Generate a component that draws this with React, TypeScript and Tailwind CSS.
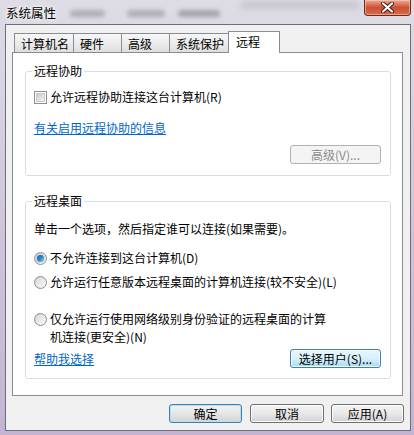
import React from "react";

const font = { fontFamily: '"Noto Sans CJK SC", "Noto Sans", sans-serif' };

function Tab({ label, w, selected, first }: { label: string; w: string; selected?: boolean; first?: boolean }) {
  if (selected) {
    return (
      <div
        className={`relative z-10 -ml-[2px] -mb-[1px] h-[22px] ${w} border border-b-0 border-[#898c95] bg-white pl-[7px] pt-[3px] text-[12px] leading-[14px] text-black`}
      >
        {label}
      </div>
    );
  }
  return (
    <div
      className={`${first ? "" : "-ml-[1px]"} h-[19px] ${w} border border-b-0 border-[#898c95] bg-gradient-to-b from-[#f7f7f7] via-[#ececec] to-[#dedede] pl-[6px] pt-[3px] text-[12px] leading-[14px] text-black`}
    >
      {label}
    </div>
  );
}

function Checkbox() {
  return (
    <div className="flex h-[13px] w-[13px] items-center justify-center border border-[#8e8f8f] bg-white">
      <div className="h-[9px] w-[9px] border border-[#c8c8c8] bg-gradient-to-br from-[#cbcbcb] to-[#f4f4f4]" />
    </div>
  );
}

function Radio({ checked }: { checked?: boolean }) {
  return (
    <div className="flex h-[13px] w-[13px] items-center justify-center rounded-full border border-[#8e8f8f] bg-gradient-to-br from-[#d0d0d0] to-[#fafafa]">
      {checked ? (
        <div className="h-[7px] w-[7px] rounded-full bg-gradient-to-br from-[#1b5f9a] via-[#2f86c8] to-[#8fd0f5] shadow-[0_0_1px_#0a3e6e]" />
      ) : (
        <div className="h-[9px] w-[9px] rounded-full bg-gradient-to-br from-[#dcdcdc] to-[#f7f7f7]" />
      )}
    </div>
  );
}

function Button({
  children,
  w,
  variant = "normal",
}: {
  children: React.ReactNode;
  w: string;
  variant?: "normal" | "default" | "hot" | "disabled";
}) {
  const base = `flex h-[19px] ${w} items-center justify-center rounded-[3px] border text-[12px] leading-[14px]`;
  if (variant === "disabled") {
    return <div className={`${base} border-[#adb2b5] bg-[#f4f4f4] text-[#8a8a8a]`}>{children}</div>;
  }
  if (variant === "hot") {
    return (
      <div className={`${base} border-[#3c7fb1] bg-gradient-to-b from-[#eaf6fd] via-[#d9f0fc] to-[#a7d9f5] text-black shadow-[inset_0_0_0_1px_#f4fbff]`}>
        {children}
      </div>
    );
  }
  if (variant === "default") {
    return (
      <div className={`${base} border-[#3c7fb1] bg-gradient-to-b from-[#f2f2f2] via-[#e6e6e6] to-[#d3d3d3] text-black shadow-[inset_0_0_0_1px_#b9dff5]`}>
        {children}
      </div>
    );
  }
  return (
    <div className={`${base} border-[#707070] bg-gradient-to-b from-[#f4f4f4] via-[#e8e8e8] to-[#d2d2d2] text-black shadow-[inset_0_0_0_1px_#fbfbfb]`}>
      {children}
    </div>
  );
}

export default function App() {
  return (
    <div
      className="relative h-[435px] w-[414px] overflow-hidden bg-gradient-to-b from-[#dedce4] via-[#cfc6db] to-[#c3b4d4]"
      style={font}
    >
      {/* blurred background bits behind glass title bar */}
      <div className="pointer-events-none absolute left-[70px] top-[10px] h-[7px] w-[35px] rounded bg-[#9c9aa6] opacity-70 blur-[2px]" />
      <div className="pointer-events-none absolute left-[127px] top-[10px] h-[7px] w-[38px] rounded bg-[#9c9aa6] opacity-70 blur-[2px]" />
      <div className="pointer-events-none absolute left-[178px] top-[10px] h-[7px] w-[42px] rounded bg-[#8e8c98] opacity-70 blur-[2px]" />
      <div className="pointer-events-none absolute left-[240px] top-[2px] h-[6px] w-[120px] rounded bg-[#a9a6b4] opacity-50 blur-[3px]" />

      {/* title bar */}
      <div className="relative flex h-[24px] items-start">
        <div
          className="pl-[6px] pt-[6px] text-[12.5px] leading-[14px] text-black"
          style={{ textShadow: "0 0 6px #fff, 0 0 3px #fff" }}
        >
          系统属性
        </div>
        <div className="ml-auto mr-[3px] flex h-[16px] w-[47px] items-center justify-center rounded-b-[4px] border border-t-0 border-[#6b2a1e] bg-gradient-to-b from-[#e9a996] via-[#cc4f34] to-[#d96a4c] shadow-[inset_0_0_0_1px_rgba(255,220,200,0.5)]">
          <svg width="13" height="11" viewBox="0 0 13 11">
            <path d="M2 1.5 L11 9.5 M11 1.5 L2 9.5" stroke="#3a1a12" strokeWidth="4" strokeLinecap="round" />
            <path d="M2 1.5 L11 9.5 M11 1.5 L2 9.5" stroke="#ffffff" strokeWidth="2.2" strokeLinecap="round" />
          </svg>
        </div>
      </div>

      {/* client area */}
      <div className="ml-[5px] h-[407px] w-[406px] border border-[#6e6d7a] bg-[#f0f0f0]">
        {/* tabs */}
        <div className="flex h-[27px] items-end pl-[8px]">
          <Tab label="计算机名" w="w-[60px]" first />
          <Tab label="硬件" w="w-[49px]" />
          <Tab label="高级" w="w-[49px]" />
          <Tab label="系统保护" w="w-[61px]" />
          <Tab label="远程" w="w-[52px]" selected />
        </div>

        {/* panel */}
        <div className="ml-[6px] h-[344px] w-[391px] border border-[#898c95] bg-white text-[12px] leading-[14px] text-black">
          {/* group 1 */}
          <div className="relative ml-[12px] mt-[18px] h-[105px] w-[366px] rounded-[3px] border border-[#d5dfe5] pl-[8px] pr-[9px] pt-[18px]">
            <div className="absolute -top-[8px] left-[6px] bg-white px-[2px]">远程协助</div>
            <div className="flex h-[14px] items-center gap-[3px]">
              <Checkbox />
              <span>允许远程协助连接这台计算机(R)</span>
            </div>
            <div className="mt-[17px] h-[14px]">
              <span className="text-[#0066cc] underline">有关启用远程协助的信息</span>
            </div>
            <div className="mt-[10px] flex justify-end">
              <Button w="w-[91px]" variant="disabled">
                高级(V)...
              </Button>
            </div>
          </div>

          {/* group 2 */}
          <div className="relative ml-[12px] mt-[25px] h-[178px] w-[366px] rounded-[3px] border border-[#d5dfe5] pl-[8px] pr-[9px] pt-[20px]">
            <div className="absolute -top-[8px] left-[6px] bg-white px-[2px]">远程桌面</div>
            <div className="h-[14px]">单击一个选项，然后指定谁可以连接(如果需要)。</div>
            <div className="mt-[15px] flex h-[14px] items-center gap-[3px]">
              <Radio checked />
              <span>不允许连接到这台计算机(D)</span>
            </div>
            <div className="mt-[10px] flex h-[14px] items-center gap-[3px]">
              <Radio />
              <span>允许运行任意版本远程桌面的计算机连接(较不安全)(L)</span>
            </div>
            <div className="mt-[21px] flex items-start gap-[3px]">
              <div className="pt-[3px]">
                <Radio />
              </div>
              <div className="leading-[18px]">
                仅允许运行使用网络级别身份验证的远程桌面的计算
                <br />
                机连接(更安全)(N)
              </div>
            </div>
            <div className="mt-[3px] flex h-[19px] items-center justify-between">
              <span className="text-[#0066cc] underline">帮助我选择</span>
              <Button w="w-[91px]" variant="hot">
                选择用户(S)...
              </Button>
            </div>
          </div>
        </div>

        {/* bottom buttons */}
        <div className="mt-[8px] flex justify-end pr-[6px]">
          <Button w="w-[73px]" variant="default">
            确定
          </Button>
          <div className="ml-[8px]">
            <Button w="w-[74px]">取消</Button>
          </div>
          <div className="ml-[7px]">
            <Button w="w-[73px]">应用(A)</Button>
          </div>
        </div>
      </div>
    </div>
  );
}
